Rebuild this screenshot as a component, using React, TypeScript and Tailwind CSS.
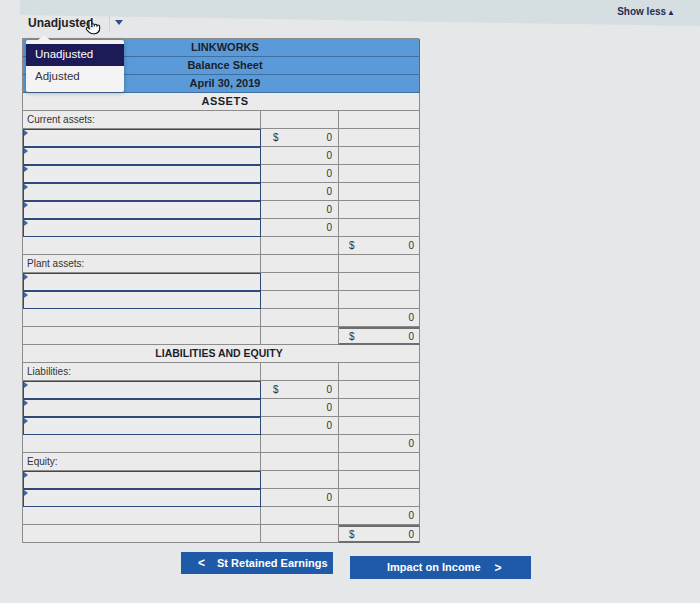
import React from "react";
import { Pointer } from "lucide-react";

type Cell = { dollar?: boolean; val?: string; thick?: boolean };
type Row =
  | { kind: "label"; text: string }
  | { kind: "input"; c2?: Cell; c3?: Cell }
  | { kind: "blank"; c2?: Cell; c3?: Cell }
  | { kind: "full"; text: string };

const rows: Row[] = [
  { kind: "label", text: "Current assets:" },
  { kind: "input", c2: { dollar: true, val: "0" } },
  { kind: "input", c2: { val: "0" } },
  { kind: "input", c2: { val: "0" } },
  { kind: "input", c2: { val: "0" } },
  { kind: "input", c2: { val: "0" } },
  { kind: "input", c2: { val: "0" } },
  { kind: "blank", c3: { dollar: true, val: "0" } },
  { kind: "label", text: "Plant assets:" },
  { kind: "input" },
  { kind: "input" },
  { kind: "blank", c3: { val: "0" } },
  { kind: "blank", c3: { dollar: true, val: "0", thick: true } },
  { kind: "full", text: "LIABILITIES AND EQUITY" },
  { kind: "label", text: "Liabilities:" },
  { kind: "input", c2: { dollar: true, val: "0" } },
  { kind: "input", c2: { val: "0" } },
  { kind: "input", c2: { val: "0" } },
  { kind: "blank", c3: { val: "0" } },
  { kind: "label", text: "Equity:" },
  { kind: "input" },
  { kind: "input", c2: { val: "0" } },
  { kind: "blank", c3: { val: "0" } },
  { kind: "blank", c3: { dollar: true, val: "0", thick: true } },
];

function NumCell({ c, col3 }: { c?: Cell; col3?: boolean }) {
  return (
    <div
      className={`h-[18px] border-r border-b border-[#8c8c8c] flex items-center justify-between text-[10px] text-[#333] ${
        col3 ? "pl-[10px] pr-[5px]" : "pl-[12px] pr-[6px]"
      } ${c?.thick ? "border-t-2 border-t-[#6d6d6d] border-b-2 border-b-[#6d6d6d]" : ""}`}
    >
      <span>{c?.dollar ? "$" : ""}</span>
      <span>{c?.val ?? ""}</span>
    </div>
  );
}

export default function App() {
  return (
    <div className="w-[700px] h-[603px] bg-[#e6e7e8] relative overflow-hidden font-['Liberation_Sans',Arial,sans-serif]">
      {/* top band */}
      <div className="h-[26px] ml-[20px] bg-[#d5dee1] flex justify-end pt-[7px] pr-[25px] [clip-path:polygon(0_0,100%_0,100%_100%,0_58%)]">
        <span className="text-[10px] font-bold text-[#1f2f55] leading-none">
          Show less<span className="text-[8px] ml-[1px]">▲</span>
        </span>
      </div>

      {/* select */}
      <div className="flex items-center ml-[28px] -mt-[12px] h-[17px]">
        <span className="text-[12px] font-bold text-[#222] leading-none">Unadjusted</span>
        <div className="ml-[16px] h-[17px] w-[18px] border-l border-[#d0d2d4] flex items-center justify-center">
          <svg width="8" height="5" viewBox="0 0 8 5">
            <path d="M0 0 L8 0 L4 5 Z" fill="#2f4f8f" />
          </svg>
        </div>
      </div>

      {/* table */}
      <div className="ml-[22px] mt-[7px] w-[397px] border-t border-l border-[#8c8c8c] grid grid-cols-[238px_78px_81px] bg-[#ebebec]">
        <div className="col-span-3 h-[18px] bg-[#5b9ad8] border-b border-r border-[#3f6f9e] flex items-center justify-center text-[11px] font-bold text-[#1b1f2b] pl-[8px]">
          LINKWORKS
        </div>
        <div className="col-span-3 h-[18px] bg-[#5b9ad8] border-b border-r border-[#3f6f9e] flex items-center justify-center text-[11px] font-bold text-[#1b1f2b] pl-[8px]">
          Balance Sheet
        </div>
        <div className="col-span-3 h-[18px] bg-[#5b9ad8] border-b border-r border-[#3f6f9e] flex items-center justify-center text-[11px] font-bold text-[#1b1f2b] pl-[8px]">
          April 30, 2019
        </div>
        <div className="col-span-3 h-[18px] border-b border-r border-[#8c8c8c] flex items-center justify-center text-[11px] font-bold text-[#1b1f2b] tracking-[0.5px] pl-[8px]">
          ASSETS
        </div>
        {rows.map((r, i) => {
          if (r.kind === "full") {
            return (
              <div
                key={i}
                className="col-span-3 h-[18px] border-b border-r border-[#8c8c8c] flex items-center justify-center text-[10.5px] font-bold text-[#1b1f2b] pr-[4px]"
              >
                {r.text}
              </div>
            );
          }
          if (r.kind === "label") {
            return (
              <React.Fragment key={i}>
                <div className="h-[18px] border-r border-b border-[#8c8c8c] flex items-start pt-[1px] pl-[4px] text-[10px] text-[#333]">
                  {r.text}
                </div>
                <NumCell />
                <NumCell col3 />
              </React.Fragment>
            );
          }
          return (
            <React.Fragment key={i}>
              {r.kind === "input" ? (
                <div className="h-[18px] border-[1.5px] border-[#2e4a78] relative bg-[#ececed]">
                  <svg className="absolute left-0 top-0" width="4" height="6" viewBox="0 0 4 6">
                    <path d="M0 0 L4 3 L0 6 Z" fill="#3a63a8" />
                  </svg>
                </div>
              ) : (
                <div className="h-[18px] border-r border-b border-[#8c8c8c]" />
              )}
              <NumCell c={r.c2} />
              <NumCell c={r.c3} col3 />
            </React.Fragment>
          );
        })}
      </div>

      {/* buttons */}
      <div className="flex items-start mt-[9px] ml-[181px] gap-[17px]">
        <button className="w-[152px] h-[22px] bg-[#1f5aa8] text-white text-[11px] font-bold flex items-center pl-[17px]">
          <span className="mr-[12px] text-[12px]">&lt;</span>
          St Retained Earnings
        </button>
        <button className="w-[181px] h-[23px] mt-[4px] bg-[#1f5aa8] text-white text-[11px] font-bold flex items-center pl-[37px]">
          Impact on Income
          <span className="ml-[14px] text-[12px]">&gt;</span>
        </button>
      </div>

      {/* dropdown menu overlay */}
      <div className="absolute left-[26px] top-[40px] w-[98px] bg-[#f4f4f5] shadow-[0_1px_4px_rgba(0,0,0,0.3)] rounded-[2px] py-[4px]">
        <div className="absolute -top-[5px] left-[12px] w-0 h-0 border-l-[6px] border-r-[6px] border-b-[5px] border-l-transparent border-r-transparent border-b-[#f4f4f5]" />
        <div className="h-[22px] bg-[#1c1b58] text-white text-[11.5px] flex items-center pl-[9px]">Unadjusted</div>
        <div className="h-[22px] text-[#333] text-[11.5px] flex items-center pl-[9px]">Adjusted</div>
      </div>

      {/* cursor */}
      <div className="absolute left-[85px] top-[19px]">
        <Pointer size={16} strokeWidth={1.6} fill="white" color="#111" />
      </div>
    </div>
  );
}
